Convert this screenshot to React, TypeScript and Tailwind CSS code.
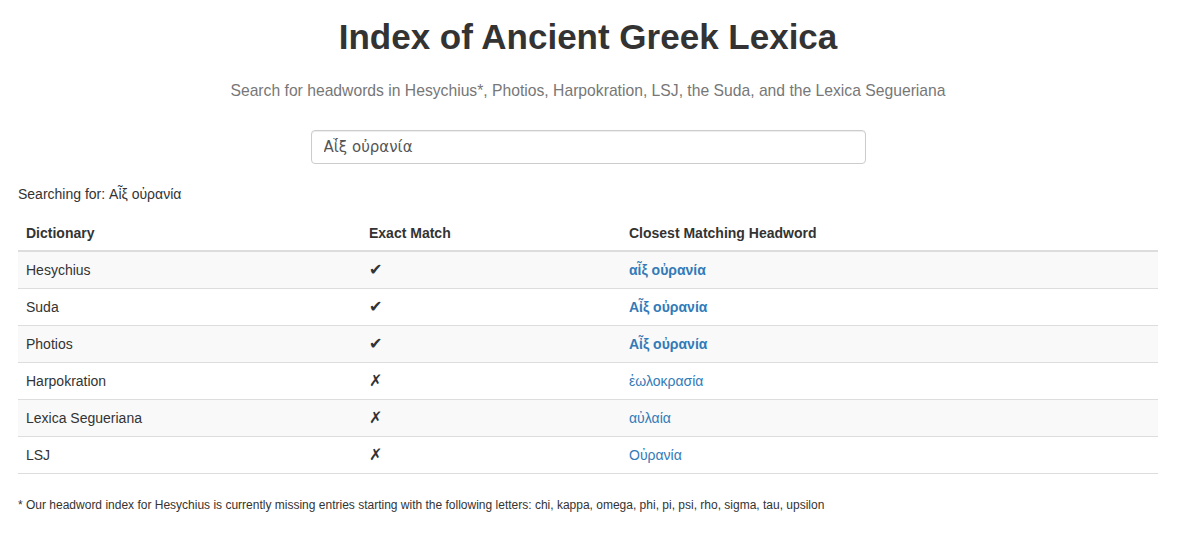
const ROWS = [
  { dict: 'Hesychius', exact: true, word: 'αἷξ οὐρανία' },
  { dict: 'Suda', exact: true, word: 'Αἶξ οὐρανία' },
  { dict: 'Photios', exact: true, word: 'Αἶξ οὐρανία' },
  { dict: 'Harpokration', exact: false, word: 'ἑωλοκρασία' },
  { dict: 'Lexica Segueriana', exact: false, word: 'αὐλαία' },
  { dict: 'LSJ', exact: false, word: 'Οὐρανία' },
];

export default function App() {
  return (
    <div className="min-h-[538px] bg-white pl-[18px] pr-[20px] font-['Liberation_Sans',Arial,sans-serif] text-[14px] text-[#333]">
      <h1 className="pt-[17px] text-center text-[35px] leading-[40px] font-bold text-[#333]">
        Index of Ancient Greek Lexica
      </h1>
      <p className="mt-[23px] text-center text-[15.7px] leading-[22px] text-[#777]">
        Search for headwords in Hesychius*, Photios, Harpokration, LSJ, the Suda, and the Lexica Segueriana
      </p>
      <div className="mt-[28px] flex justify-center">
        <input
          defaultValue="Αἶξ οὐρανία"
          className="h-[34px] w-[555px] rounded-[4px] border border-[#ccc] px-3 font-['DejaVu_Sans',sans-serif] text-[15px] text-[#555] shadow-[inset_0_1px_1px_rgba(0,0,0,0.075)] outline-none"
        />
      </div>
      <p className="mt-[21px] text-[14px] leading-[18px]">Searching for: Αἶξ οὐρανία</p>
      <table className="mt-[10px] w-full border-collapse text-[14px]">
        <thead>
          <tr className="border-b-2 border-[#ddd]">
            <th className="w-[343px] px-2 pt-[10px] pb-[7px] text-left font-bold leading-[20px]">Dictionary</th>
            <th className="w-[260px] px-2 pt-[10px] pb-[7px] text-left font-bold leading-[20px]">Exact Match</th>
            <th className="px-2 pt-[10px] pb-[7px] text-left font-bold leading-[20px]">Closest Matching Headword</th>
          </tr>
        </thead>
        <tbody>
          {ROWS.map((r, i) => (
            <tr key={r.dict} className={i % 2 === 0 ? 'border-b border-[#ddd] bg-[#f9f9f9]' : 'border-b border-[#ddd]'}>
              <td className="px-2 py-[8px] leading-[20px]">{r.dict}</td>
              <td className="px-2 py-[8px] leading-[20px] font-['DejaVu_Sans',sans-serif] text-[16px]">{r.exact ? '✔' : '✗'}</td>
              <td className="px-2 py-[8px] leading-[20px]">
                <a href="#" className={r.exact ? 'font-bold text-[#337ab7]' : 'text-[#337ab7]'}>
                  {r.word}
                </a>
              </td>
            </tr>
          ))}
        </tbody>
      </table>
      <p className="mt-[23px] text-[12px] leading-[16px]">
        * Our headword index for Hesychius is currently missing entries starting with the following letters: chi, kappa, omega, phi, pi, psi, rho, sigma, tau, upsilon
      </p>
    </div>
  );
}
